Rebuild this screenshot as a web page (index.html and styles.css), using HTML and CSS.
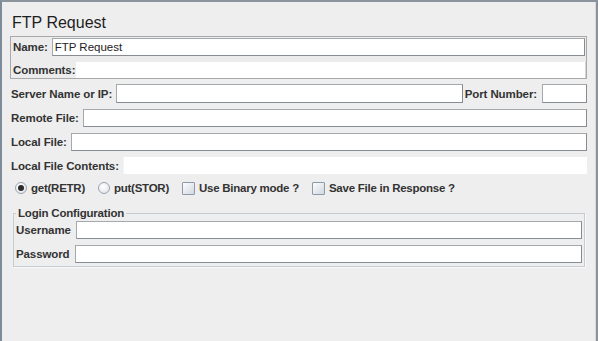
FILE: index.html
```html
<!DOCTYPE html>
<html lang="en">
<head>
    <meta charset="UTF-8">
    <title>FTP Request</title>
    <link rel="stylesheet" href="styles.css">
</head>
<body>
    <div class="panel">
        <h1 class="title">FTP Request</h1>

        <div class="namebox">
            <div class="nb-row">
                <label class="lbl">Name:</label>
                <input class="field grow" value="FTP Request">
            </div>
            <div class="nb-row comments">
                <label class="lbl">Comments:</label>
                <div class="comment-area"></div>
            </div>
        </div>

        <div class="row server">
            <label class="lbl">Server Name or IP:</label>
            <input class="field grow">
            <label class="lbl port-lbl">Port Number:</label>
            <input class="field port">
        </div>
        <div class="row">
            <label class="lbl">Remote File:</label>
            <input class="field grow">
        </div>
        <div class="row">
            <label class="lbl">Local File:</label>
            <input class="field grow">
        </div>
        <div class="row contents">
            <label class="lbl">Local File Contents:</label>
            <div class="contents-area"></div>
        </div>

        <div class="options">
            <span class="opt"><span class="radio on"><span class="dot"></span></span><span class="lbl">get(RETR)</span></span>
            <span class="opt"><span class="radio"></span><span class="lbl">put(STOR)</span></span>
            <span class="opt"><span class="check"></span><span class="lbl">Use Binary mode ?</span></span>
            <span class="opt"><span class="check"></span><span class="lbl">Save File in Response ?</span></span>
        </div>

        <fieldset class="login">
            <legend class="lbl">Login Configuration</legend>
            <div class="lrow">
                <label class="lbl">Username</label>
                <input class="field grow">
            </div>
            <div class="lrow">
                <label class="lbl">Password</label>
                <input class="field grow">
            </div>
        </fieldset>
    </div>
</body>
</html>
```

FILE: styles.css
```css
body {
    margin: 0;
    background: #eeeeee;
    font-family: "Liberation Sans", Arial, sans-serif;
    overflow: hidden;
}

.panel {
    box-sizing: border-box;
    height: 100vh;
    background: #eeeeee;
    border-top: 2px solid #8b949d;
    border-left: 2px solid #7e8b98;
    border-right: 2px solid #8b949d;
    box-shadow: inset -1px 0 0 #d9d9d9;
}

.title {
    margin: 11px 0 0 10px;
    font-size: 16px;
    font-weight: normal;
    line-height: 20px;
    color: #1e1e1e;
}

.lbl {
    font-size: 11.5px;
    font-weight: bold;
    color: #333;
    white-space: nowrap;
    letter-spacing: -0.1px;
}

.field {
    box-sizing: border-box;
    height: 18px;
    margin: 0;
    padding: 0 2px;
    border: 1px solid #a4a9ae;
    border-right-color: #878c92;
    border-bottom-color: #878c92;
    background: #fff;
    font-family: "Liberation Sans", Arial, sans-serif;
    font-size: 11.5px;
    color: #222;
    outline: none;
    min-width: 0;
}

.grow {
    flex: 1;
}

/* name + comments box */
.namebox {
    box-sizing: border-box;
    width: 577px;
    margin: 3px 0 0 8px;
    border: 1px solid #a9a9a9;
    padding: 1px 1px 0 2px;
    background: #ececec;
}

.nb-row {
    display: flex;
    align-items: center;
    gap: 4px;
    height: 18px;
}

.nb-row.comments {
    height: 20px;
    margin-top: 2px;
    align-items: flex-end;
    gap: 1px;
}

.comments .lbl {
    line-height: 16px;
}

.comment-area {
    flex: 1;
    height: 16px;
    margin-right: -1px;
    background: #fff;
    border-right: 1px solid #d4d4d4;
    box-sizing: border-box;
}

/* form rows */
.row {
    display: flex;
    align-items: center;
    gap: 4px;
    height: 18px;
    margin: 6px 9px 0 9px;
}

.row.server {
    height: 19px;
    margin-top: 5px;
    gap: 4px;
}

.row.server .field {
    height: 19px;
}

.port-lbl {
    margin-left: -2px;
    padding-right: 1px;
}

.port {
    width: 45px;
    flex: none;
}

.row.contents {
    height: 17px;
}

.contents-area {
    flex: 1;
    height: 17px;
    background: #fff;
    border-left: 1px solid #f4f4f4;
}

/* radio + checkboxes */
.options {
    display: flex;
    align-items: center;
    height: 14px;
    margin: 7px 0 0 13px;
}

.opt {
    display: flex;
    align-items: center;
    gap: 4px;
    margin-right: 13px;
}

.opt .lbl {
    letter-spacing: -0.25px;
}

.radio {
    box-sizing: border-box;
    width: 12px;
    height: 12px;
    border-radius: 50%;
    border: 1px solid #9ba4ad;
    background: radial-gradient(circle at 40% 35%, #ffffff, #dbe1e8);
    display: flex;
    align-items: center;
    justify-content: center;
}

.radio .dot {
    width: 6px;
    height: 6px;
    border-radius: 50%;
    background: #2b2b2b;
}

.check {
    box-sizing: border-box;
    width: 13px;
    height: 13px;
    border: 1px solid #8e9aa8;
    border-radius: 1px;
    background: linear-gradient(135deg, #fdfdfe, #d0d8e2);
}

/* login fieldset */
.login {
    margin: 11px 11px 0 11px;
    padding: 1px 2px 3px 2px;
    border: 1px solid #c5ccd4;
    box-shadow: 1px 1px 0 #f8f8f8;
}

.login legend {
    padding: 0 2px;
    margin-left: 0;
    line-height: 14px;
    letter-spacing: -0.2px;
}

.lrow {
    display: flex;
    align-items: center;
    gap: 5px;
    height: 18px;
}

.lrow + .lrow {
    margin-top: 6px;
}
```
